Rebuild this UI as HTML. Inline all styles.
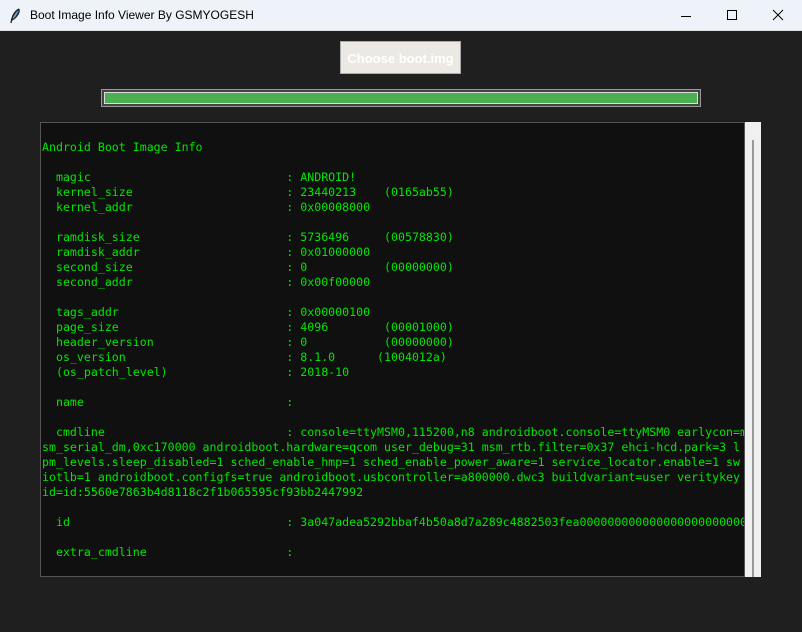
<!DOCTYPE html>
<html><head><style>
*{margin:0;padding:0;box-sizing:border-box}
body{width:802px;height:632px;background:#1f1f1f;position:relative;overflow:hidden;font-family:"Liberation Sans",sans-serif}
.tb{position:absolute;left:0;top:0;width:802px;height:31px;background:#eef3fa;border-bottom:1px solid #ddd}
.tb .t{position:absolute;left:30px;top:8px;font-size:12px;color:#000}
.btn{position:absolute;left:340px;top:41px;width:121px;height:33px;background:#ece9e4;border:1px solid #aaa;color:#fff;font-weight:bold;font-size:13px;text-align:center;line-height:33px}
.pb{position:absolute;left:101px;top:89px;width:600px;height:18px;border:1px solid #999;background:#444;padding:2px}
.pb div{width:100%;height:100%;background:#4caf50;border:1px solid #ddd}
.txt{position:absolute;left:40px;top:122px;width:705px;height:455px;background:#101010;border:1px solid #555;overflow:hidden}
pre{position:absolute;left:1px;top:17px;font-family:"DejaVu Sans Mono",monospace;font-size:11.6px;line-height:15px;color:#00e600;white-space:pre}
.sb{position:absolute;left:745px;top:122px;width:16px;height:455px;background:#f0f0f0}
.sb div{position:absolute;left:7px;top:18px;width:2px;height:437px;background:#999}
</style></head><body>
<div class="tb">
<svg style="position:absolute;left:9px;top:8px" width="12" height="16" viewBox="0 0 12 16"><path d="M10 1 C6 3 3 8 2 15 M10 1 C11 5 7 10 3 12" stroke="#222" stroke-width="1.3" fill="#4a7ab0"/></svg>
<span class="t">Boot Image Info Viewer By GSMYOGESH</span>
<svg style="position:absolute;left:680px;top:10px" width="12" height="12"><path d="M1 6.5H11" stroke="#000"/></svg>
<svg style="position:absolute;left:726px;top:9px" width="12" height="12"><rect x="1.5" y="1.5" width="9" height="9" fill="none" stroke="#000"/></svg>
<svg style="position:absolute;left:772px;top:9px" width="12" height="12"><path d="M1 1L11 11M11 1L1 11" stroke="#000"/></svg>
</div>
<div class="btn">Choose boot.img</div>
<div class="pb"><div></div></div>
<div class="txt"><pre>Android Boot Image Info

  magic                            : ANDROID!
  kernel_size                      : 23440213    (0165ab55)
  kernel_addr                      : 0x00008000

  ramdisk_size                     : 5736496     (00578830)
  ramdisk_addr                     : 0x01000000
  second_size                      : 0           (00000000)
  second_addr                      : 0x00f00000

  tags_addr                        : 0x00000100
  page_size                        : 4096        (00001000)
  header_version                   : 0           (00000000)
  os_version                       : 8.1.0      (1004012a)
  (os_patch_level)                 : 2018-10

  name                             :

  cmdline                          : console=ttyMSM0,115200,n8 androidboot.console=ttyMSM0 earlycon=m
sm_serial_dm,0xc170000 androidboot.hardware=qcom user_debug=31 msm_rtb.filter=0x37 ehci-hcd.park=3 l
pm_levels.sleep_disabled=1 sched_enable_hmp=1 sched_enable_power_aware=1 service_locator.enable=1 sw
iotlb=1 androidboot.configfs=true androidboot.usbcontroller=a800000.dwc3 buildvariant=user veritykey
id=id:5560e7863b4d8118c2f1b065595cf93bb2447992

  id                               : 3a047adea5292bbaf4b50a8d7a289c4882503fea000000000000000000000000

  extra_cmdline                    :
</pre></div>
<div class="sb"><div></div></div>
</body></html>
